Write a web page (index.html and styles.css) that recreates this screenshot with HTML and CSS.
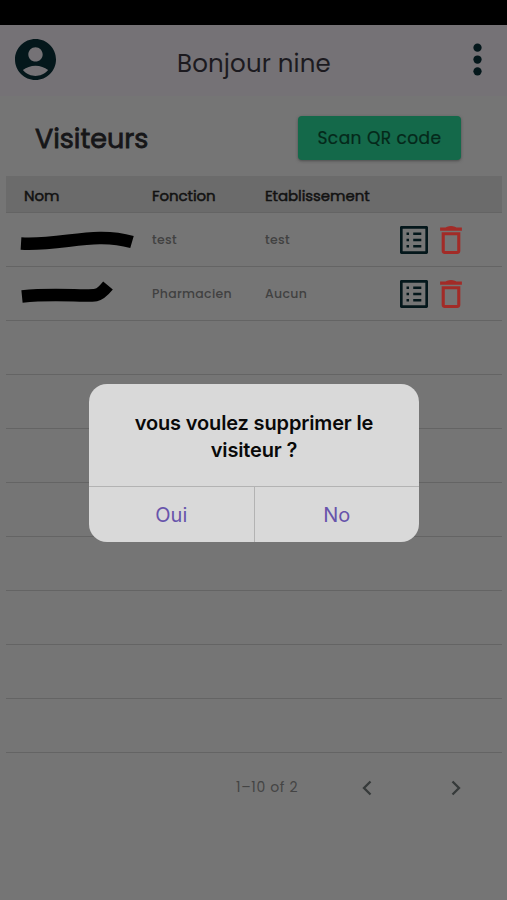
FILE: index.html
```html
<!DOCTYPE html>
<html lang="fr">
<head>
<meta charset="utf-8">
<title>Visiteurs</title>
<link rel="stylesheet" href="styles.css">
</head>
<body>
<svg class="symbols" aria-hidden="true">
  <symbol id="list" viewBox="3 3 18 18"><path d="M11.500 7.200h5.200v1.600h-5.200zm0 4h5.200v1.600h-5.200zm0 4h5.200v1.600h-5.200zM7.200 7.200h1.600v1.600H7.200zm0 4h1.600v1.600H7.200zm0 4h1.600v1.600H7.200zM20.100 3H3.900c-.5 0-.9.4-.9.9v16.200c0 .4.4.9.9.9h16.200c.4 0 .9-.5.9-.9V3.900c0-.5-.5-.9-.9-.9zM19.300 19.300H4.700V4.700h14.600v14.600z"/></symbol>
  <symbol id="trash" viewBox="5 3 14 18"><path d="M6 19c0 1.100.9 2 2 2h8c1.100 0 2-.9 2-2V7H6v12zM8 9h8v10H8V9zm6.500-5.500q-2.500-1-5 0L8.500 4H5v2h14V4h-3.500z"/></symbol>
</svg>
<div class="status"></div>
<header class="appbar">
  <svg class="avatar" viewBox="2 2 20 20"><path d="M12 2C6.480 2 2 6.480 2 12s4.480 10 10 10 10-4.480 10-10S17.520 2 12 2zm0 4c1.930 0 3.500 1.570 3.500 3.500S13.930 13 12 13s-3.500-1.570-3.500-3.500S10.070 6 12 6zm0 14c-2.030 0-4.430-.82-6.140-2.880C7.550 15.800 9.680 15 12 15s4.450.8 6.140 2.120C16.430 19.180 14.030 20 12 20z"/></svg>
  <h1>Bonjour nine</h1>
  <svg class="more" viewBox="0 0 8 32"><circle cx="4" cy="4.500" r="4"/><circle cx="4" cy="16" r="4"/><circle cx="4" cy="27.500" r="4"/></svg>
</header>
<section class="toolbar">
  <h2>Visiteurs</h2>
  <button class="scan">Scan QR code</button>
</section>
<main class="table">
  <div class="row head"><b class="c-nom">Nom</b><b>Fonction</b><b>Etablissement</b></div>
  <div class="row">
    <svg class="stroke" viewBox="0 0 125 30"><path d="M5 18.500C46 21 78 6 116 17" fill="none" stroke="#000" stroke-width="12.500"/></svg>
    <span>test</span><span>test</span>
    <span class="actions"><svg class="list"><use href="#list"/></svg><svg class="trash"><use href="#trash"/></svg></span>
  </div>
  <div class="row">
    <svg class="stroke" viewBox="0 0 125 30"><path d="M6 17.500C41 14 69 18 80 16Q85 15 92 6.500" fill="none" stroke="#000" stroke-width="12.500"/></svg>
    <span>Pharmacien</span><span>Aucun</span>
    <span class="actions"><svg class="list"><use href="#list"/></svg><svg class="trash"><use href="#trash"/></svg></span>
  </div>
  <div class="row"></div><div class="row"></div><div class="row"></div><div class="row"></div>
  <div class="row"></div><div class="row"></div><div class="row"></div><div class="row"></div>
</main>
<footer class="pager">
  <span>1–10 of 2</span>
  <svg viewBox="0 0 10 16"><path d="M8.500 1.500L2 8l6.500 6.500"/></svg>
  <svg viewBox="0 0 10 16"><path d="M1.500 1.500L8 8l-6.500 6.500"/></svg>
</footer>
<div class="dialog" role="dialog">
  <p>vous voulez supprimer le<br>visiteur ?</p>
  <div class="choices"><button>Oui</button><button>No</button></div>
</div>
</body>
</html>
```

FILE: styles.css
```css
* { box-sizing: border-box; }
body { margin: 0; height: 900px; overflow: hidden; background: #757575; font-family: Poppins, Inter, sans-serif; color: #161618; }
h1, h2, p { margin: 0; font-weight: 400; }
button { border: 0; padding: 0; background: none; font: inherit; }
.symbols { display: none; }
.status { height: 25px; background: #000; }
.appbar { height: 71px; background: #757276; display: flex; align-items: flex-start; padding: 14px 25px 0 15px; }
.avatar { width: 41px; height: 41px; fill: #04171b; }
h1 { flex: 1; margin-left: 121px; padding-top: 10px; font-size: 24.500px; line-height: 30px; letter-spacing: .15px; color: #1c1a1f; }
.more { width: 9px; height: 33px; margin-top: 4px; fill: #04171b; }
.toolbar { height: 80px; display: flex; justify-content: space-between; padding: 20px 46px 0 35px; }
h2 { font-size: 27px; line-height: 45px; letter-spacing: -.05px; -webkit-text-stroke: .8px; }
.scan { width: 163px; height: 44px; border-radius: 4px; background: #14694a; color: #05281a; font-size: 17px; letter-spacing: .45px; -webkit-text-stroke: .2px; box-shadow: 0 1px 3px #4c4c4c; }
.table { margin: 0 5px 0 6px; }
.row { height: 54px; display: grid; grid-template-columns: 146px 113px 129px 1fr; align-items: center; padding-top: 1px; border-bottom: 1px solid #646464; color: #414141; font-size: 12.500px; font-weight: 500; letter-spacing: .3px; }
.head { height: 37px; background: #6b6b6b; color: #121212; font-size: 15px; letter-spacing: -.08px; padding-top: 2px; }
.head b { font-weight: 400; -webkit-text-stroke: .5px; }
.c-nom { padding-left: 18px; }
.stroke { width: 125px; height: 30px; margin-left: 10px; }
.actions { display: flex; align-items: center; gap: 12px; padding-left: 6px; }
.list { width: 28px; height: 28px; fill: #04171b; }
.trash { width: 22px; height: 28px; fill: #a22b27; }
.pager { display: flex; align-items: center; height: 69px; padding-left: 236px; color: #444; font-size: 14px; letter-spacing: .65px; }
.pager span { flex: 0 0 126px; }
.pager svg { flex: none; width: 10px; height: 16px; margin-right: 79px; fill: none; stroke: #363a3a; stroke-width: 2.300; }
.pager svg:last-child { margin-right: 0; }
.dialog { position: absolute; left: 89px; top: 384px; width: 330px; height: 158px; border-radius: 18px; overflow: hidden; background: #d9d9d9; font-family: Inter, sans-serif; }
.dialog p { height: 102px; padding-top: 26px; text-align: center; font-size: 20px; line-height: 27px; font-weight: 600; color: #090909; letter-spacing: -.15px; }
.choices { display: flex; height: 56px; border-top: 1px solid #b3b3b3; }
.choices button { flex: 1; color: #6754ab; font-size: 20px; letter-spacing: 0; }
.choices button + button { border-left: 1.500px solid #b3b3b3; }
```
